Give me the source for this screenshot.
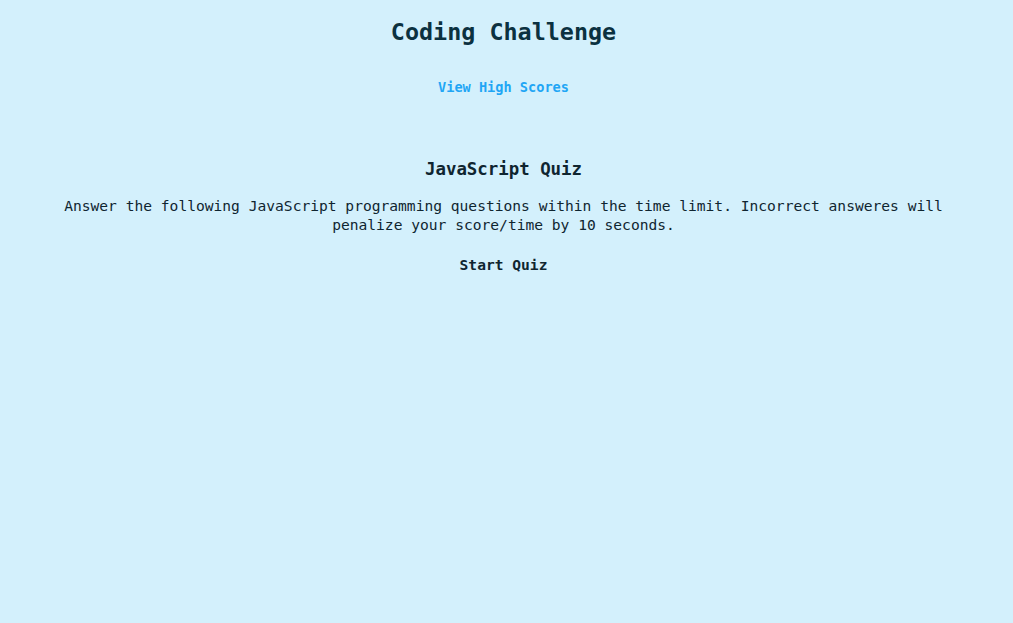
export default function App() {
  return (
    <div
      className="min-h-[623px] w-full bg-[#d3f0fc] pr-[6px] text-center"
      style={{ fontFamily: '"DejaVu Sans Mono", "Liberation Mono", monospace' }}
    >
      <header className="pt-[18px]">
        <h1 className="text-[23.4px] font-bold leading-[28px] text-[#0b3140]">Coding Challenge</h1>
        <a href="#" className="mt-[33px] block text-[13.6px] font-bold leading-[16px] text-[#1fa6f5]">
          View High Scores
        </a>
      </header>
      <main className="px-[50px]">
        <h2 className="mt-[63px] text-[17.4px] font-bold leading-[22px] text-[#0f2530]">JavaScript Quiz</h2>
        <p className="mt-[15.5px] text-[14.6px] leading-[19px] text-[#0f2530]">
          Answer the following JavaScript programming questions within the time limit. Incorrect answeres will penalize your score/time by 10 seconds.
        </p>
        <button className="mt-[22.5px] text-[14.6px] font-bold leading-[18px] text-[#0f2530]">Start Quiz</button>
      </main>
    </div>
  );
}
